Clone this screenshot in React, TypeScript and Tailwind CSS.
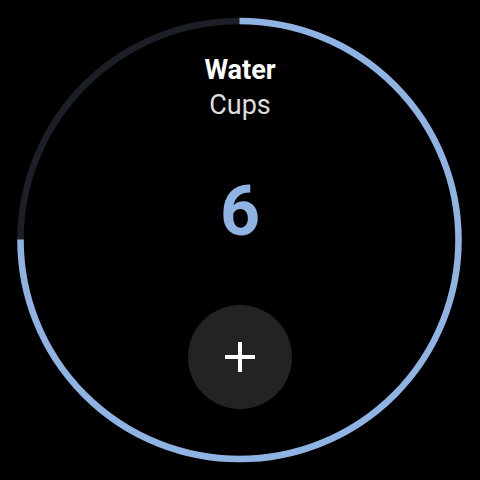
import React from "react";

const R = 219;
const C = 2 * Math.PI * R;

function ProgressRing({ progress }: { progress: number }) {
    return (
        <svg className="absolute inset-0" width={480} height={480} viewBox="0 0 480 480">
            <circle cx={239.5} cy={240} r={R} fill="none" stroke="#1c1f26" strokeWidth={6.5} />
            <circle
                cx={239.5}
                cy={240}
                r={R}
                fill="none"
                stroke="#8fb3e3"
                strokeWidth={6.5}
                strokeDasharray={`${C * progress} ${C}`}
                transform="rotate(-90 239.5 240)"
            />
        </svg>
    );
}

export default function App() {
    return (
        <div
            className="relative w-[480px] h-[480px] bg-black overflow-hidden"
            style={{ fontFamily: "Roboto, 'Liberation Sans', sans-serif" }}
        >
            <ProgressRing progress={0.75} />
            <div className="relative flex flex-col items-center pt-[53px]">
                <div className="text-[27px] leading-[35px] font-bold text-white">Water</div>
                <div className="text-[27px] leading-[34px] text-[#dedede]">Cups</div>
                <div className="mt-[51px] text-[70px] leading-[76px] font-bold text-[#8fb3e3]">6</div>
                <button className="mt-[56px] w-[104px] h-[104px] rounded-full bg-[#222325] flex items-center justify-center">
                    <svg width="34" height="34" viewBox="0 0 34 34">
                        <path d="M17 2v30M2 17h30" stroke="white" strokeWidth="4" />
                    </svg>
                </button>
            </div>
        </div>
    );
}
